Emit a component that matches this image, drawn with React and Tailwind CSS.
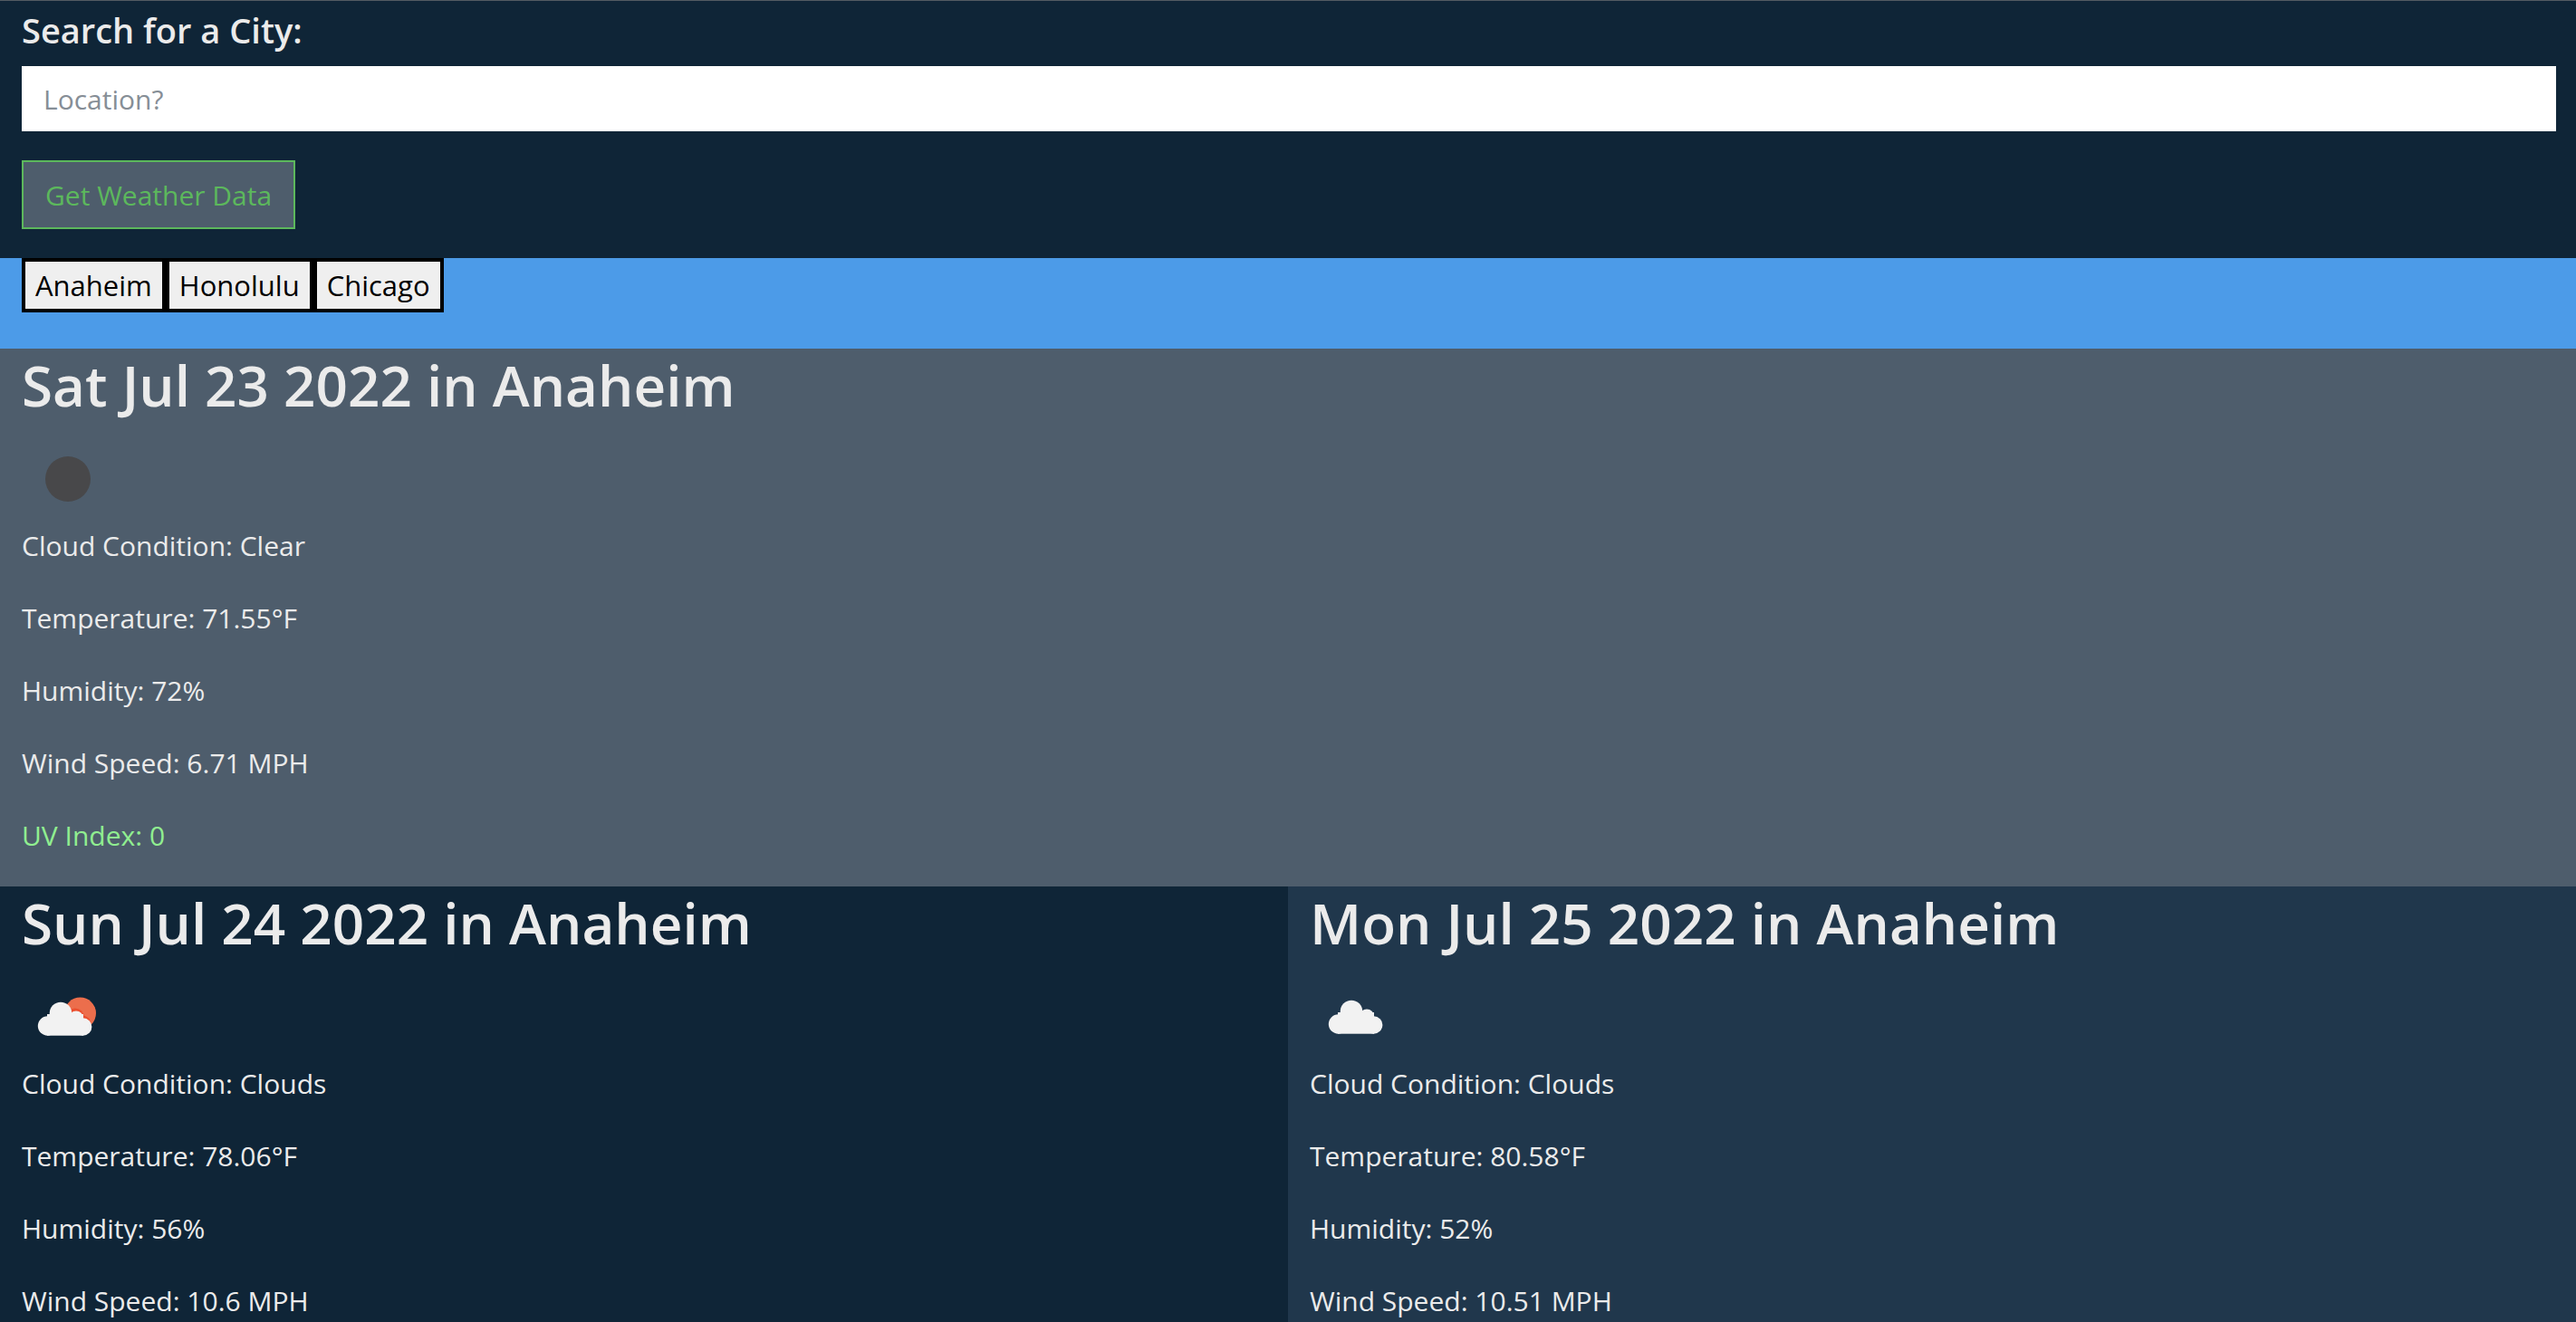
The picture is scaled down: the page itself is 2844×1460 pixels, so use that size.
const cities = ["Anaheim", "Honolulu", "Chicago"];

const today = {
  title: "Sat Jul 23 2022 in Anaheim",
  icon: "clear",
  condition: "Clear",
  temperature: "71.55",
  humidity: "72",
  wind: "6.71",
  uv: "0",
};

const forecast = [
  {
    title: "Sun Jul 24 2022 in Anaheim",
    icon: "fewClouds",
    condition: "Clouds",
    temperature: "78.06",
    humidity: "56",
    wind: "10.6",
    tone: "bg-[#0f2537]",
  },
  {
    title: "Mon Jul 25 2022 in Anaheim",
    icon: "clouds",
    condition: "Clouds",
    temperature: "80.58",
    humidity: "52",
    wind: "10.51",
    tone: "bg-[#20374c]",
  },
];

function Cloud() {
  return (
    <g fill="#f2f2f2">
      <circle cx="47" cy="39" r="12.3" />
      <circle cx="64" cy="44.5" r="8" />
      <circle cx="32.5" cy="53" r="10.7" />
      <circle cx="71.7" cy="54" r="9.7" />
      <rect x="32" y="40" width="40" height="23.7" />
    </g>
  );
}

function WeatherIcon({ kind }) {
  return (
    <svg viewBox="0 0 104 104" className="size-[104px]" role="img" aria-label={kind}>
      {kind === "clear" && <circle cx="51" cy="54" r="25" fill="#48484a" />}
      {kind === "fewClouds" && (
        <g>
          <clipPath id="sunDisc">
            <circle cx="64.5" cy="50" r="17.5" />
          </clipPath>
          <circle cx="64.5" cy="50" r="17.5" fill="#ec6e4c" />
          <g clipPath="url(#sunDisc)" fill="#eb4f2e">
            <circle cx="59" cy="54.5" r="10" />
            <circle cx="67" cy="62" r="9.5" />
          </g>
          <g transform="translate(-4 11)">
            <Cloud />
          </g>
        </g>
      )}
      {kind === "clouds" && (
        <g transform="translate(-1 9)">
          <Cloud />
        </g>
      )}
    </svg>
  );
}

function Report({ day, className }) {
  return (
    <section className={`flex flex-col px-6 ${className}`}>
      <h2 className="mb-2.5 text-[62px] font-semibold leading-[80px]">{day.title}</h2>
      <WeatherIcon kind={day.icon} />
      <div className="flex flex-col gap-8 pb-8 text-[30px] leading-[48px]">
        <p>Cloud Condition: {day.condition}</p>
        <p>Temperature: {day.temperature}°F</p>
        <p>Humidity: {day.humidity}%</p>
        <p>Wind Speed: {day.wind} MPH</p>
        {day.uv && <p className="text-[#90ee90]">UV Index: {day.uv}</p>}
      </div>
    </section>
  );
}

export default function App() {
  return (
    <main className="h-screen overflow-hidden bg-[#0f2537] font-['Open_Sans','Noto_Sans',sans-serif] text-[#ebebeb]">
      <form
        className="flex flex-col items-start border-t border-[#545b62] pb-8 pl-6 pr-[22px]"
        onSubmit={(e) => e.preventDefault()}
      >
        <label htmlFor="city" className="mb-3 pt-1 text-[38px] font-semibold leading-[56px]">
          Search for a City:
        </label>
        <input
          id="city"
          type="text"
          placeholder="Location?"
          className="mb-8 h-[72px] w-full bg-white px-6 text-[30px] text-gray-800 placeholder:text-[#868e96]"
        />
        <button
          type="submit"
          className="h-[76px] border-2 border-[#5cb85c] bg-[#4e5d6c] px-6 text-[30px] text-[#5cb85c]"
        >
          Get Weather Data
        </button>
      </form>
      <nav className="flex bg-[#4c9be8] px-6 pb-10">
        {cities.map((city) => (
          <button
            key={city}
            type="button"
            className="h-[60px] border-4 border-black bg-[#efefef] px-[11px] text-[31px] leading-[52px] text-black"
          >
            {city}
          </button>
        ))}
      </nav>
      <Report day={today} className="bg-[#4e5d6c]" />
      <div className="grid grid-cols-2">
        {forecast.map((day) => (
          <Report key={day.title} day={day} className={day.tone} />
        ))}
      </div>
    </main>
  );
}
